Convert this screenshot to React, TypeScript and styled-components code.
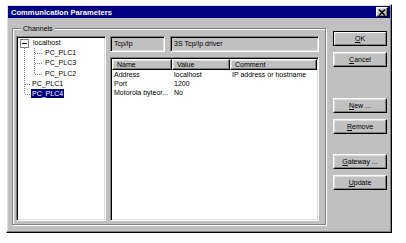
import React from 'react';
import styled, { createGlobalStyle, css } from 'styled-components';

const GlobalStyle = createGlobalStyle`
	html, body {
		margin: 0;
		padding: 0;
		background: #fff;
	}
	body {
		font-family: 'Liberation Sans', Arial, sans-serif;
		font-size: 7px;
		color: #000;
	}
`;

const raised = css`
	border: 1px solid;
	border-color: #fff #000 #000 #fff;
	box-shadow: inset -1px -1px 0 #808080, inset 1px 1px 0 #dfdfdf;
`;

const sunken = css`
	border: 1px solid;
	border-color: #808080 #fff #fff #808080;
	box-shadow: inset 1px 1px 0 #000, inset -1px -1px 0 #dfdfdf;
`;

const Dialog = styled.div`
	box-sizing: border-box;
	margin: 4px 0 0 6px;
	width: 386px;
	height: 229px;
	padding: 1px;
	background: #c0c0c0;
	${raised};
	display: flex;
	flex-direction: column;
`;

const TitleBar = styled.div`
	height: 12px;
	flex: none;
	background: #000080;
	color: #fff;
	display: flex;
	align-items: center;
	justify-content: space-between;
	padding: 0 2px 0 3px;
	font-weight: bold;
	font-size: 7.6px;
`;

const CloseButton = styled.div`
	box-sizing: border-box;
	width: 12px;
	height: 10px;
	background: #c0c0c0;
	${raised};
	display: flex;
	align-items: center;
	justify-content: center;
`;

const Body = styled.div`
	flex: 1;
	display: flex;
	padding: 6px 3px 0 4px;
	gap: 7px;
`;

const GroupBox = styled.fieldset`
	box-sizing: border-box;
	margin: 0;
	width: 314px;
	height: 201px;
	padding: 3px 6px 3px 3px;
	min-inline-size: 0;
	border: 1px solid #808080;
	box-shadow: 1px 1px 0 #fff, inset 1px 1px 0 #fff;
	display: flex;
	gap: 4px;
`;

const Legend = styled.legend`
	margin-left: 5px;
	padding: 0 2px;
	line-height: 9px;
	background: #c0c0c0;
	position: relative;
`;

const TreeBox = styled.div`
	box-sizing: border-box;
	width: 90px;
	height: 100%;
	background: #fff;
	${sunken};
	padding: 1px;
	position: relative;
`;

const TreeLines = styled.svg`
	position: absolute;
	left: 1px;
	top: 1px;
`;

const TreeRow = styled.div<{ $indent: number }>`
	height: 10.2px;
	line-height: 10px;
	padding-left: ${(p) => p.$indent}px;
	white-space: nowrap;
`;

const TreeLabel = styled.span<{ $selected?: boolean }>`
	padding: 1px 1px;
	${(p) =>
		p.$selected &&
		css`
			background: #000080;
			color: #fff;
		`}
`;

const RightColumn = styled.div`
	flex: 1;
	display: flex;
	flex-direction: column;
	gap: 5px;
`;

const FieldRow = styled.div`
	display: flex;
	gap: 5px;
	height: 16px;
`;

const ReadOnlyField = styled.div<{ $width?: number }>`
	box-sizing: border-box;
	${(p) => (p.$width ? `width: ${p.$width}px;` : 'flex: 1;')}
	${sunken};
	background: #c0c0c0;
	padding: 0 3px;
	line-height: 14px;
	white-space: nowrap;
`;

const ListView = styled.div`
	flex: 1;
	box-sizing: border-box;
	background: #fff;
	${sunken};
	padding: 1px;
	display: flex;
	flex-direction: column;
`;

const columns = '60px 58px 1fr';

const HeaderRow = styled.div`
	display: grid;
	grid-template-columns: ${columns};
	height: 11px;
`;

const HeaderCell = styled.div`
	box-sizing: border-box;
	background: #c0c0c0;
	${raised};
	padding-left: 4px;
	line-height: 9px;
	white-space: nowrap;
	overflow: hidden;
`;

const ListRow = styled.div`
	display: grid;
	grid-template-columns: ${columns};
	height: 9px;
	line-height: 9px;
`;

const ListCell = styled.div`
	padding-left: 2px;
	white-space: nowrap;
	overflow: hidden;
`;

const ButtonColumn = styled.div`
	width: 54px;
	display: flex;
	flex-direction: column;
	padding-top: 7px;
`;

const ButtonGroup = styled.div<{ $top?: number }>`
	display: flex;
	flex-direction: column;
	gap: 6px;
	margin-top: ${(p) => p.$top ?? 0}px;
`;

const Button = styled.button<{ $default?: boolean }>`
	box-sizing: border-box;
	width: 54px;
	height: 15px;
	padding: 0;
	font: inherit;
	color: #000;
	background: #c0c0c0;
	${raised};
	${(p) =>
		p.$default &&
		css`
			border-color: #000;
			box-shadow: inset 1px 1px 0 #fff, inset -1px -1px 0 #808080;
		`}
`;

const tree = [
	{ label: 'localhost', indent: 14 },
	{ label: 'PC_PLC1', indent: 26 },
	{ label: 'PC_PLC3', indent: 26 },
	{ label: 'PC_PLC2', indent: 26 },
	{ label: 'PC_PLC1', indent: 13 },
	{ label: 'PC_PLC4', indent: 13, selected: true },
];

const params = [
	{ name: 'Address', value: 'localhost', comment: 'IP address or hostname' },
	{ name: 'Port', value: '1200', comment: '' },
	{ name: 'Motorola byteor...', value: 'No', comment: '' },
];

const dots = { stroke: '#808080', strokeWidth: 1, strokeDasharray: '1 1' };

export default function App() {
	return (
		<>
			<GlobalStyle />
			<Dialog>
				<TitleBar>
					<span>Communication Parameters</span>
					<CloseButton>
						<svg width="8" height="7" viewBox="0 0 8 7">
							<path d="M1 0.5 L7 6.5 M7 0.5 L1 6.5" stroke="#000" strokeWidth="1.4" />
						</svg>
					</CloseButton>
				</TitleBar>
				<Body>
					<GroupBox>
						<Legend>Channels</Legend>
						<TreeBox>
							<TreeLines width="86" height="70" shapeRendering="crispEdges">
								{/* root level */}
								<line x1="6.5" y1="10" x2="6.5" y2="56" {...dots} />
								<line x1="7" y1="46.5" x2="12" y2="46.5" {...dots} />
								<line x1="7" y1="56.5" x2="12" y2="56.5" {...dots} />
								{/* children of localhost */}
								<line x1="16.5" y1="10" x2="16.5" y2="36" {...dots} />
								<line x1="17" y1="15.5" x2="24" y2="15.5" {...dots} />
								<line x1="17" y1="25.5" x2="24" y2="25.5" {...dots} />
								<line x1="17" y1="36.5" x2="24" y2="36.5" {...dots} />
								<rect x="2.5" y="1.5" width="8" height="8" fill="#fff" stroke="#808080" />
								<line x1="4" y1="5.5" x2="9" y2="5.5" stroke="#000" />
							</TreeLines>
							{tree.map((item, i) => (
								<TreeRow key={i} $indent={item.indent}>
									<TreeLabel $selected={item.selected}>{item.label}</TreeLabel>
								</TreeRow>
							))}
						</TreeBox>
						<RightColumn>
							<FieldRow>
								<ReadOnlyField $width={55}>Tcp/Ip</ReadOnlyField>
								<ReadOnlyField>3S Tcp/Ip driver</ReadOnlyField>
							</FieldRow>
							<ListView>
								<HeaderRow>
									<HeaderCell>Name</HeaderCell>
									<HeaderCell>Value</HeaderCell>
									<HeaderCell>Comment</HeaderCell>
								</HeaderRow>
								{params.map((p) => (
									<ListRow key={p.name}>
										<ListCell>{p.name}</ListCell>
										<ListCell>{p.value}</ListCell>
										<ListCell>{p.comment}</ListCell>
									</ListRow>
								))}
							</ListView>
						</RightColumn>
					</GroupBox>
					<ButtonColumn>
						<ButtonGroup>
							<Button $default>
								<u>O</u>K
							</Button>
							<Button>
								<u>C</u>ancel
							</Button>
						</ButtonGroup>
						<ButtonGroup $top={31}>
							<Button>
								<u>N</u>ew ...
							</Button>
							<Button>
								<u>R</u>emove
							</Button>
						</ButtonGroup>
						<ButtonGroup $top={20}>
							<Button>
								<u>G</u>ateway ...
							</Button>
							<Button>
								<u>U</u>pdate
							</Button>
						</ButtonGroup>
					</ButtonColumn>
				</Body>
			</Dialog>
		</>
	);
}
